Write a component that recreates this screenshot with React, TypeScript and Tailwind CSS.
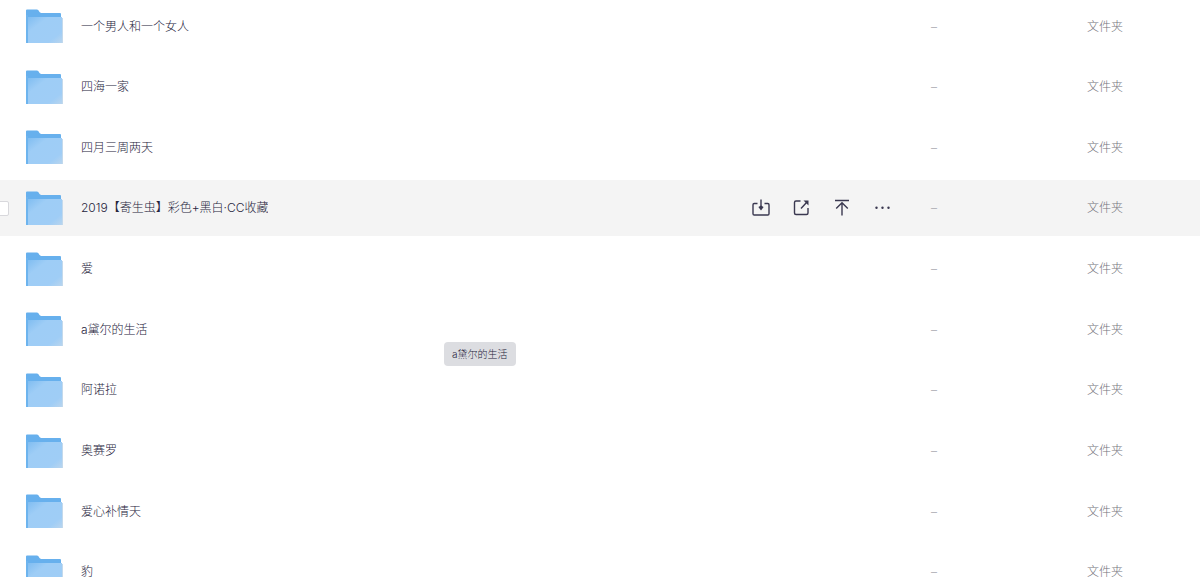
import React from "react";

const files = [
  "一个男人和一个女人",
  "四海一家",
  "四月三周两天",
  "2019【寄生虫】彩色+黑白·CC收藏",
  "爱",
  "a黛尔的生活",
  "阿诺拉",
  "奥赛罗",
  "爱心补情天",
  "豹",
];
const activeIndex = 3;

function FolderIcon() {
  return (
    <svg width="37" height="34" viewBox="0 0 37 34" className="shrink-0" aria-hidden="true">
      <defs>
        <linearGradient id="front" x1="0" y1="0" x2="1" y2="1">
          <stop offset="0" stopColor="#80bdf1" />
          <stop offset="0.3" stopColor="#9ecdf6" />
          <stop offset="0.78" stopColor="#9fcdf6" />
          <stop offset="1" stopColor="#b9d5ee" />
        </linearGradient>
      </defs>
      <path d="M0 1.5Q0 .5 1 .5H11C12.8 .5 13.2 4 15.5 4H34Q35 4 35 5V20H0Z" fill="#67b0ed" />
      <path d="M0 6H2V34H0Z" fill="#6db4ee" />
      <path d="M2 8H36V34H2Z" fill="url(#front)" />
      <path d="M36 9H37V34H36Z" fill="#c3d9ec" />
    </svg>
  );
}

function Action({ label, children }: { label: string; children: React.ReactNode }) {
  return (
    <button type="button" aria-label={label} className="text-[#3a3850]">
      <svg width="20" height="20" viewBox="0 0 20 20" fill="none" stroke="currentColor" strokeWidth="1.4" className="block">
        {children}
      </svg>
    </button>
  );
}

function RowActions() {
  return (
    <div className="flex gap-5">
      <Action label="保存">
        <path d="M6.500 5.500H3.200Q2 5.500 2 6.700V15.800Q2 17 3.200 17H16.800Q18 17 18 15.800V6.700Q18 5.500 16.800 5.500H13.500M10 1.500V10" />
        <path d="M7.400 9L10 7.600L12.600 9L10 12.600Z" fill="currentColor" stroke="none" />
      </Action>
      <Action label="分享">
        <path d="M9.500 3H5Q3.500 3 3.500 4.500V15Q3.500 16.500 5 16.500H15.500Q17 16.500 17 15V10M10 10.500L15.500 4.500" />
        <path d="M12.500 2.500H17.500V7.500Z" fill="currentColor" stroke="none" />
      </Action>
      <Action label="置顶">
        <path d="M4 2.500H18M11 17.500V4.500M5.200 10.500L11 4.700L16.800 10.500" />
      </Action>
      <Action label="更多">
        <g fill="currentColor" stroke="none">
          <circle cx="5.500" cy="9.700" r="1.200" />
          <circle cx="11.500" cy="9.700" r="1.200" />
          <circle cx="17.500" cy="9.700" r="1.200" />
        </g>
      </Action>
    </div>
  );
}

export default function App() {
  return (
    <main className="relative h-screen overflow-hidden bg-white font-['Inter','Noto_Sans_CJK_SC',sans-serif] text-xs font-light text-[#26243c]">
      <table className="-mt-0.5 block w-full">
        <tbody className="flex h-[602px] flex-col justify-between">
          {files.map((name, i) => (
            <tr key={name} className={i === activeIndex ? "flex h-14 items-center bg-[#f4f4f4]" : "flex h-14 items-center"}>
              <td className="flex w-[26px] shrink-0 pt-0.5">
                {i === activeIndex && (
                  <input
                    type="checkbox"
                    aria-label={name}
                    className="-ml-1.5 size-[15px] appearance-none rounded-xs border border-[#d8d8dc] bg-white"
                  />
                )}
              </td>
              <td className="flex min-w-0 flex-1 items-center gap-[18px]">
                <FolderIcon />
                <span className="truncate pt-px">{name}</span>
              </td>
              <td className="w-[180px] shrink-0">{i === activeIndex && <RowActions />}</td>
              <td className="w-[156px] shrink-0 pt-px text-[#a8a8b0]">–</td>
              <td className="w-[113px] shrink-0 pt-px text-[#75757c]">文件夹</td>
            </tr>
          ))}
        </tbody>
      </table>
      <div role="tooltip" className="absolute top-[342px] left-[37%] flex h-6 items-center rounded bg-[#dcdde1] px-2 pt-px text-[10px]">
        a黛尔的生活
      </div>
    </main>
  );
}
